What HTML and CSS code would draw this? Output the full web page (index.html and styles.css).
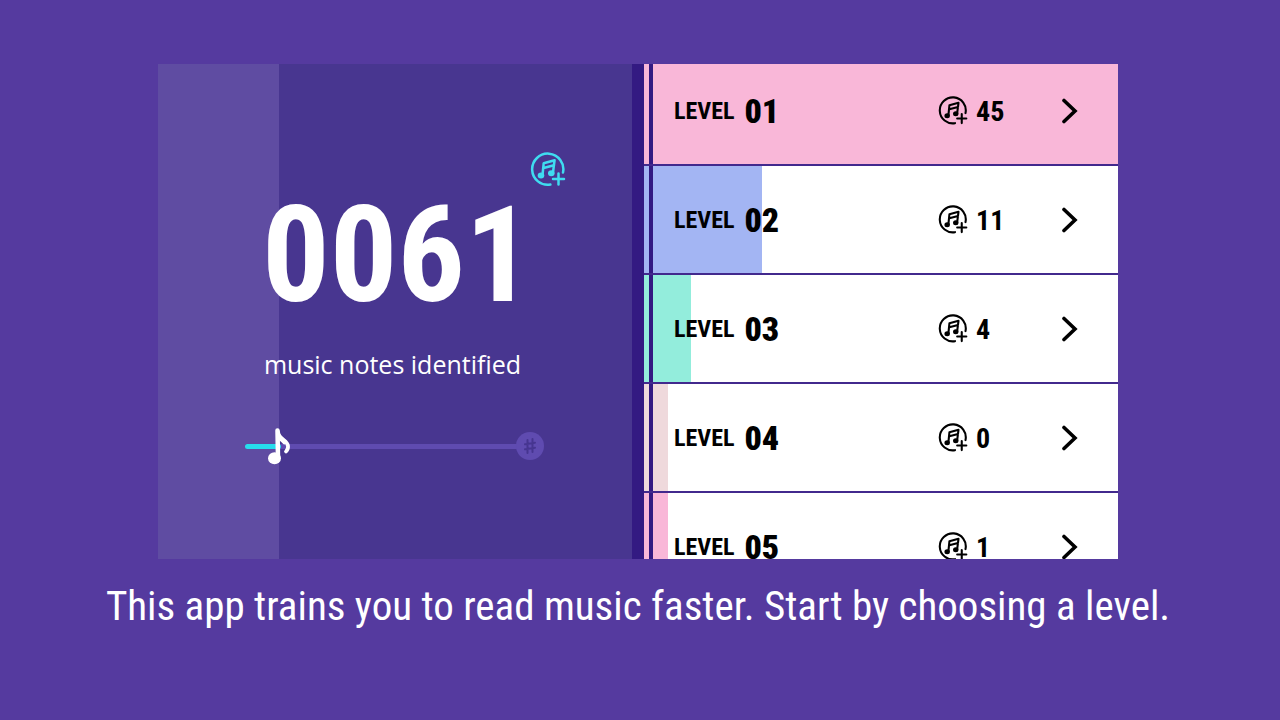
FILE: index.html
```html
<!DOCTYPE html>
<html lang="en">
<head>
<meta charset="utf-8">
<title>Music reading trainer</title>
<link rel="stylesheet" href="styles.css">
</head>
<body>
<svg class="defs" aria-hidden="true">
  <symbol id="notes" viewBox="0 0 36 36">
    <g fill="none" stroke="currentColor" stroke-width="2.5" stroke-linecap="round">
      <path d="M20.4 32.6A15.6 15.6 0 1 1 33 20.5"/>
      <path d="M28.5 21.5v11M23 27h11"/>
      <path d="M12.5 23 13.7 11.2 24.6 8.2 23 20.5M13.6 16 24 13.2" stroke-linejoin="round"/>
    </g>
    <ellipse cx="11" cy="23.6" rx="3.3" ry="3" fill="currentColor"/>
    <ellipse cx="21.3" cy="21.2" rx="3.3" ry="3" fill="currentColor"/>
  </symbol>
  <symbol id="chevron" viewBox="0 0 18 26">
    <path d="M3 2.5 14 13 3 23.5" fill="none" stroke="currentColor" stroke-width="3.6" stroke-linecap="round" stroke-linejoin="miter"/>
  </symbol>
</svg>
<main class="page">
  <div class="stage">
    <section class="score">
      <div class="summary">
        <svg class="score-icon" aria-hidden="true"><use href="#notes"/></svg>
        <strong class="total">0061</strong>
        <p class="label">music notes identified</p>
        <div class="track">
          <div class="line"><div class="done"></div></div>
          <svg class="note" viewBox="0 0 24 38" aria-hidden="true">
            <g fill="none" stroke="#fff" stroke-linecap="round">
              <path d="M10.5 3.500 11 31" stroke-width="4.5"/>
              <path d="M11 5c1 8 9.500 8 10 14 .2 2-.5 4-2 5.500" stroke-width="3.8"/>
              <path d="M11.500 9c2 3 4 3.500 6 6" stroke-width="4.5"/>
            </g>
            <ellipse cx="7.500" cy="31.300" rx="6.500" ry="6" fill="#fff"/>
          </svg>
          <svg class="sharp" viewBox="0 0 28 28" aria-hidden="true">
            <circle cx="14" cy="14" r="14" fill="#5f4bb0"/>
            <path d="M11.500 8v13M16.500 7v13M9 12.300l10-1.600M9 17.300l10-1.600" stroke="#463590" stroke-width="2" stroke-linecap="round"/>
          </svg>
        </div>
      </div>
    </section>
    <nav class="levels" aria-label="Levels">
      <a class="row pink" href="#l1"><span class="stripe"></span><span class="cell"><span class="fill" style="width:100%"></span><span class="name">LEVEL <b>01</b></span><span class="count"><svg class="icon"><use href="#notes"/></svg>45</span><svg class="go"><use href="#chevron"/></svg></span></a>
      <a class="row blue" href="#l2"><span class="stripe"></span><span class="cell"><span class="fill" style="width:23.5%"></span><span class="name">LEVEL <b>02</b></span><span class="count"><svg class="icon"><use href="#notes"/></svg>11</span><svg class="go"><use href="#chevron"/></svg></span></a>
      <a class="row mint" href="#l3"><span class="stripe"></span><span class="cell"><span class="fill" style="width:8.2%"></span><span class="name">LEVEL <b>03</b></span><span class="count"><svg class="icon"><use href="#notes"/></svg>4</span><svg class="go"><use href="#chevron"/></svg></span></a>
      <a class="row sand" href="#l4"><span class="stripe"></span><span class="cell"><span class="fill" style="width:3.2%"></span><span class="name">LEVEL <b>04</b></span><span class="count"><svg class="icon"><use href="#notes"/></svg>0</span><svg class="go"><use href="#chevron"/></svg></span></a>
      <a class="row pink" href="#l5"><span class="stripe"></span><span class="cell"><span class="fill" style="width:3.2%"></span><span class="name">LEVEL <b>05</b></span><span class="count"><svg class="icon"><use href="#notes"/></svg>1</span><svg class="go"><use href="#chevron"/></svg></span></a>
    </nav>
  </div>
  <p class="caption">This app trains you to read music faster. Start by choosing a level.</p>
</main>
</body>
</html>
```
FILE: styles.css
```css
* { box-sizing: border-box; }
body {
  margin: 0;
  background: #553a9f;
  color: #fff;
  font-family: "Roboto Condensed", "Liberation Sans Narrow", Roboto, sans-serif;
}
.defs { display: none; }
.page { min-height: 100vh; padding: 64px 4px 0 0; }
.stage {
  display: grid;
  grid-template: minmax(0, 1fr) / 486fr 474fr;
  width: 75.25%;
  min-height: 0;
  margin: 0 auto;
  aspect-ratio: 960 / 495;
  overflow: hidden;
}
.score {
  border-right: 12px solid #331a82;
  background: linear-gradient(90deg, #5f4ca2 25.6%, #483690 25.6%);
  padding: 88px 66px 0 87px;
}
.summary { display: flex; flex-direction: column; }
.score-icon { width: 36px; height: 36px; color: #3fdcf0; align-self: flex-end; }
.total { font-size: 134px; line-height: 136px; padding-left: 17px; }
.label {
  margin: 24px 0 0 19px;
  font: 25px/32px "Open Sans", sans-serif;
  white-space: nowrap;
}
.track { position: relative; height: 38px; margin: 47px 22px 0 0; display: flex; align-items: center; justify-content: flex-end; }
.line { flex: 1; height: 5px; border-radius: 3px; background: #5f4bb0; }
.done { width: 13%; height: 5px; border-radius: 3px; background: #27dcec; }
.note { position: absolute; left: 22px; top: 0; width: 24px; height: 38px; }
.sharp { width: 28px; height: 28px; margin-left: -4px; }
.levels { background: #331a82; margin-top: -7px; min-height: 0; }
.row {
  display: grid;
  grid-template-columns: 5px 1fr;
  gap: 4px;
  height: 109px;
  border-bottom: 2px solid #42298d;
  color: #000;
  text-decoration: none;
}
.pink { --tone: #f9b7d8; }
.blue { --tone: #a3b5f3; }
.mint { --tone: #93eddc; }
.sand { --tone: #efd9dc; }
.stripe { background: var(--tone); }
.cell {
  position: relative;
  display: grid;
  grid-template-columns: 264fr 123fr 57fr;
  align-items: center;
  padding: 1px 0 0 21px;
  background: #fff;
}
.fill { position: absolute; left: 0; top: 0; bottom: 0; background: var(--tone); }
.name, .count, .go { position: relative; }
.name { display: flex; align-items: center; gap: 10px; font-size: 24px; font-weight: 700; }
.name b { font-size: 34px; }
.count { display: flex; align-items: center; gap: 8px; font-size: 28px; font-weight: 700; }
.icon { width: 30px; height: 30px; }
.go { width: 18px; height: 26px; }
.caption { margin: 16px 0 0; text-align: center; font-size: 41px; line-height: 62px; }
```
